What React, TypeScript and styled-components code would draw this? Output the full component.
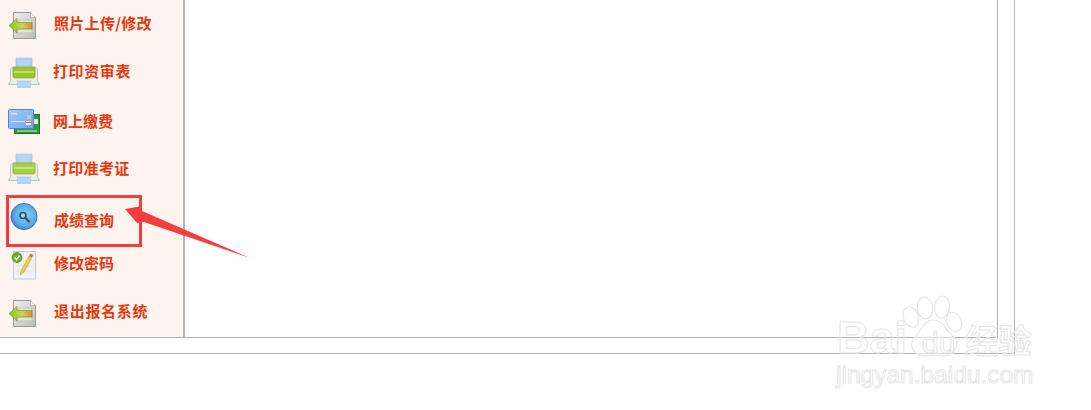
import React from "react";
import styled, {createGlobalStyle} from "styled-components";

const GlobalStyle = createGlobalStyle`
  html, body {
    margin: 0;
    padding: 0;
    background: #fff;
    overflow: hidden;
  }
`;

const Page = styled.div`
  position: relative;
  width: 1091px;
  height: 410px;
  overflow: hidden;
  background: #fff;
`;

const OuterFrame = styled.div`
  width: 1014px;
  height: 353px;
  border-right: 1px solid #b4b4b4;
  border-bottom: 1px solid #b4b4b4;
`;

const InnerFrame = styled.div`
  display: flex;
  width: 997px;
  height: 337px;
  border-right: 1px solid #b4b4b4;
  border-bottom: 1px solid #b4b4b4;
`;

const Sidebar = styled.nav`
  width: 183px;
  height: 337px;
  background: #fdf4ef;
  border-right: 2px solid #b4b4b4;
  display: flex;
  flex-direction: column;
`;

const Content = styled.main`
  flex: 1;
  background: #fff;
`;

const MenuRow = styled.div<{$drop: number; $pull: number; $spacing: number}>`
  height: 48px;
  display: flex;
  align-items: center;
  padding-left: 6px;
  gap: ${props => 12 - props.$pull}px;
  font-family: "Noto Sans CJK SC", "Liberation Serif", serif;
  font-size: 15px;
  font-weight: 700;
  letter-spacing: ${props => props.$spacing}px;
  color: #e8370c;

  span {
    padding-top: ${props => props.$drop * 2}px;
    padding-bottom: 3px;
    white-space: nowrap;
  }
`;

const IconSlot = styled.svg`
  width: 36px;
  height: 32px;
  flex: none;
`;

const Highlight = styled.div`
  position: absolute;
  left: 6px;
  top: 195px;
  width: 130px;
  height: 46px;
  border: 3px solid #f43e3e;
`;

const ArrowMark = styled.svg`
  position: absolute;
  left: 120px;
  top: 190px;
  width: 135px;
  height: 72px;
`;

const Watermark = styled.div`
  position: absolute;
  left: 836px;
  top: 292px;
  width: 200px;
  height: 98px;
  color: transparent;
  font-family: "Liberation Sans", sans-serif;
  -webkit-text-stroke: 1px #e6e6e6;
`;

const Paw = styled.svg`
  position: absolute;
  left: 0;
  top: 0;
  width: 200px;
  height: 70px;
`;

const BaiduLine = styled.div`
  position: relative;
  display: flex;
  align-items: baseline;
  height: 68px;
  padding-left: 1px;
  box-sizing: border-box;
  padding-top: 23px;
  font-size: 45px;
  font-weight: 700;
  line-height: 45px;
  white-space: nowrap;
`;

const Du = styled.span`
  font-size: 30px;
  font-weight: 400;
  margin-left: 15px;
`;

const Jingyan = styled.span`
  font-family: "Noto Sans CJK SC", sans-serif;
  font-size: 33px;
  font-weight: 700;
  margin-left: 10px;
`;

const WatermarkUrl = styled.div`
  font-size: 24.500px;
  line-height: 30px;
  white-space: nowrap;
`;

function DocArrowIcon() {
    return (
        <IconSlot viewBox="0 0 36 32">
            <defs>
                <linearGradient id="docFill" x1="0" y1="0" x2="1" y2="1">
                    <stop offset="0" stopColor="#f0f0ec"/>
                    <stop offset="1" stopColor="#bcbcb8"/>
                </linearGradient>
                <linearGradient id="arrowFill" x1="0" y1="0" x2="1" y2="0">
                    <stop offset="0" stopColor="#8cc51e"/>
                    <stop offset="0.55" stopColor="#c6d85a"/>
                    <stop offset="1" stopColor="#e08a34"/>
                </linearGradient>
            </defs>
            <path d="M7.500 4.500H24.500L29.500 9.500V30.500H7.500Z" fill="url(#docFill)" stroke="#9a9a98"/>
            <path d="M24.500 4.500V9.500H29.500" fill="#fafafa" stroke="#b0b0ae"/>
            <rect x="11" y="12" width="15" height="13" fill="#e9e4d8" stroke="#b5b0a4" strokeWidth="0.6"/>
            <path d="M3 17.500L11 10.500V14.500H26V21H11V25Z" fill="url(#arrowFill)" stroke="#6d9c1c" strokeWidth="0.7"/>
        </IconSlot>
    );
}

function PrinterIcon({speckled}: {speckled?: boolean}) {
    return (
        <IconSlot viewBox="0 0 36 32">
            <rect x="10" y="2" width="16" height="14" fill={speckled ? "#aecdf2" : "#b7d6f6"} stroke="#9dc0e8" strokeWidth="0.6"/>
            {speckled && <path d="M12 5H24M12 8H24M12 11H24" stroke="#d0e2f8" strokeDasharray="1 1"/>}
            <path d="M4.500 25V14C4.500 12 6 11 8 11H28C30 11 31.500 12 31.500 14V25L33.500 28.500H2.500Z" fill="#ededea" stroke="#c2c2be"/>
            <rect x="7" y="11" width="22" height="11" rx="1.500" fill={speckled ? "#98c52e" : "#a5cf47"} stroke="#82ab24" strokeWidth="0.7"/>
            <path d="M8 16H28" stroke={speckled ? "#c2dc5e" : "#c6e27a"} strokeWidth="2"/>
            <rect x="11.500" y="25" width="13" height="7" fill="#b7d6f6" stroke="#9dc0e8" strokeWidth="0.6"/>
        </IconSlot>
    );
}

function CardIcon() {
    return (
        <IconSlot viewBox="0 0 36 32">
            <defs>
                <linearGradient id="cardFill" x1="0" y1="0" x2="1" y2="1">
                    <stop offset="0" stopColor="#a5cdf6"/>
                    <stop offset="1" stopColor="#6ea6ea"/>
                </linearGradient>
            </defs>
            <rect x="8.500" y="10.500" width="25" height="19" fill="#2f9a3c" stroke="#1c6e2a"/>
            <rect x="11" y="26" width="20" height="2" fill="#7cc884"/>
            <rect x="2.500" y="5.500" width="25" height="19" rx="1" fill="url(#cardFill)" stroke="#4f86d2"/>
            <rect x="5" y="9" width="6" height="1.500" fill="#d3e5fa"/>
            <rect x="5" y="17" width="14" height="1" fill="#d3e5fa"/>
            <rect x="21" y="11" width="4" height="4" fill="#bcc8d4"/>
            <rect x="20" y="17" width="5" height="4" fill="#f3ede4"/>
            <rect x="20" y="18" width="5" height="1" fill="#d2553f"/>
            <rect x="28" y="15" width="4" height="5" fill="#e6e6e0"/>
        </IconSlot>
    );
}

function SearchIcon() {
    return (
        <IconSlot viewBox="0 0 36 32">
            <defs>
                <radialGradient id="ballFill" cx="0.55" cy="0.45" r="0.6">
                    <stop offset="0" stopColor="#84d6f4"/>
                    <stop offset="0.7" stopColor="#54ace6"/>
                    <stop offset="1" stopColor="#3478cc"/>
                </radialGradient>
            </defs>
            <circle cx="18" cy="16.500" r="13" fill="url(#ballFill)" stroke="#3f74ba"/>
            <circle cx="17" cy="15.500" r="3" fill="#9adaf0" stroke="#3d4a5a" strokeWidth="1.700"/>
            <path d="M19.500 18L23 21.500" stroke="#3d4a5a" strokeWidth="2.200" strokeLinecap="round"/>
        </IconSlot>
    );
}

function NotepadIcon() {
    return (
        <IconSlot viewBox="0 0 36 32">
            <rect x="7.500" y="3.500" width="22" height="27.500" fill="#f0f3f6" stroke="#c6cace"/>
            <path d="M10 13H27M10 18H27M10 23H27" stroke="#dde1e5"/>
            <path d="M14 27L15.500 22L23 8L26 9.500L18 24Z" fill="#f1cd4a" stroke="#c49a2a" strokeWidth="0.6"/>
            <path d="M23 8L24.500 5.500L27.500 7L26 9.500Z" fill="#e2685a"/>
            <circle cx="11" cy="9.500" r="5" fill="#62b32a" stroke="#3f8a1a" strokeWidth="0.7"/>
            <path d="M8.700 9.500L10.500 11.500L13.500 7.700" fill="none" stroke="#fff" strokeWidth="1.500"/>
        </IconSlot>
    );
}

const menuItems = [
    {label: "照片上传/修改", icon: <DocArrowIcon/>, drop: 0, pull: 0, spacing: 0.3},
    {label: "打印资审表", icon: <PrinterIcon speckled/>, drop: 0, pull: 1, spacing: 0.6},
    {label: "网上缴费", icon: <CardIcon/>, drop: 2, pull: 1, spacing: 0},
    {label: "打印准考证", icon: <PrinterIcon/>, drop: 1, pull: 1, spacing: 0.3},
    {label: "成绩查询", icon: <SearchIcon/>, drop: 5, pull: 0, spacing: 0},
    {label: "修改密码", icon: <NotepadIcon/>, drop: 0, pull: 0, spacing: 0},
    {label: "退出报名系统", icon: <DocArrowIcon/>, drop: 0, pull: 0, spacing: 0.7},
];

export default function App() {
    return (
        <Page>
            <GlobalStyle/>
            <OuterFrame>
                <InnerFrame>
                    <Sidebar>
                        {menuItems.map(item => (
                            <MenuRow key={item.label} $drop={item.drop} $pull={item.pull} $spacing={item.spacing}>
                                {item.icon}
                                <span>{item.label}</span>
                            </MenuRow>
                        ))}
                    </Sidebar>
                    <Content/>
                </InnerFrame>
            </OuterFrame>

            <Highlight/>
            <ArrowMark viewBox="0 0 135 72">
                <path d="M5 19L22 16L22 21L130 68L24 32L17 33Z" fill="#f43e3e"/>
            </ArrowMark>

            <Watermark>
                <Paw viewBox="0 0 200 70">
                    <g fill="rgba(255,255,255,0.5)" stroke="#e6e6e6" strokeWidth="1.200">
                        <ellipse cx="75" cy="25" rx="7.500" ry="10.500" transform="rotate(-20 75 25)"/>
                        <ellipse cx="89" cy="16" rx="7.500" ry="11" transform="rotate(-8 89 16)"/>
                        <ellipse cx="106" cy="15" rx="7.500" ry="11" transform="rotate(5 106 15)"/>
                        <ellipse cx="118" cy="30" rx="7" ry="10" transform="rotate(-25 118 30)"/>
                        <path d="M97 28C108 28 110 40 118 45C125 52 118 64 106 64C100 64 96 62 90 64C78 64 72 54 78 46C86 40 86 28 97 28Z"/>
                    </g>
                </Paw>
                <BaiduLine>
                    Bai
                    <Du>du</Du>
                    <Jingyan>经验</Jingyan>
                </BaiduLine>
                <WatermarkUrl>jingyan.baidu.com</WatermarkUrl>
            </Watermark>
        </Page>
    );
}
